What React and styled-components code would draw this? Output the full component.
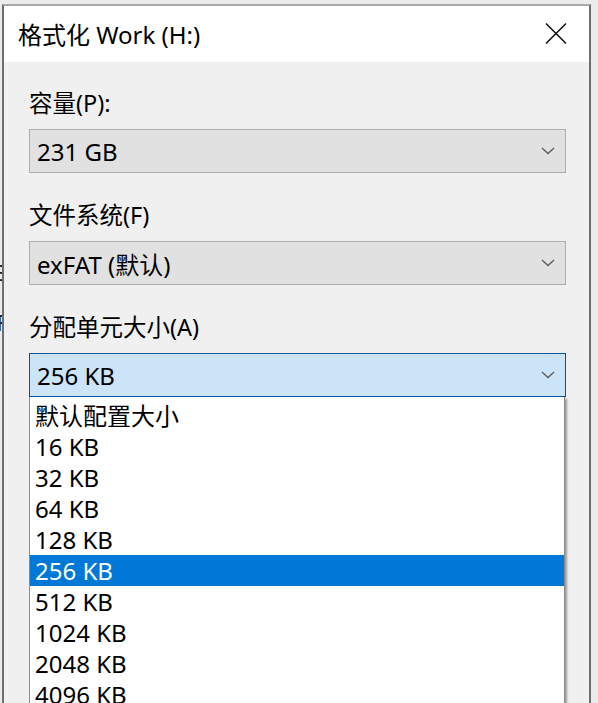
import React from "react";
import styled, { createGlobalStyle } from "styled-components";

const GlobalStyle = createGlobalStyle`
  html, body {
    margin: 0;
    padding: 0;
    background: #ebebeb;
    overflow: hidden;
  }
  body {
    font-family: "Noto Sans", "Noto Sans CJK SC", sans-serif;
    color: #000;
  }
`;

const Page = styled.div`
  display: flex;
  height: 703px;
  padding-top: 4px;
  box-sizing: border-box;
`;

// the window underneath, only its last pixels peek out on the left
const Backdrop = styled.div`
  width: 2px;
  overflow: hidden;
  display: flex;
  flex-direction: column;
  align-items: flex-end;
  padding-top: 152px;
`;

const Peek = styled.span`
  display: block;
  height: ${(p) => p.h}px;
  line-height: ${(p) => p.h}px;
  font-size: 22px;
  color: ${(p) => p.color || "#222"};
  margin-right: -6px;
  white-space: nowrap;
`;

const Window = styled.div`
  width: 589px;
  box-sizing: border-box;
  display: flex;
  flex-direction: column;
  border: 2px solid #6f6f6f;
  border-top: 2px solid #a9a9a9;
  border-bottom: none;
  background: #f0f0f0;
`;

const TitleBar = styled.div`
  height: 56px;
  flex-shrink: 0;
  background: #fff;
  display: flex;
  align-items: center;
  justify-content: space-between;
  padding: 0 22px 2px 14px;
  box-sizing: border-box;
`;

const Title = styled.div`
  font-size: 24px;
`;

const CloseButton = styled.div`
  width: 22px;
  height: 22px;
  display: flex;
  align-items: center;
  justify-content: center;
`;

const Body = styled.div`
  flex: 1;
  display: flex;
  flex-direction: column;
  gap: 27px;
  padding: 26px 23px 0 25px;
`;

const Field = styled.div`
  display: flex;
  flex-direction: column;
  gap: 11px;
`;

const Label = styled.div`
  height: 30px;
  line-height: 30px;
  font-size: 23.5px;
`;

const ComboWrap = styled.div`
  position: relative;
`;

const Combo = styled.div`
  height: 44px;
  box-sizing: border-box;
  display: flex;
  align-items: center;
  justify-content: space-between;
  padding: 0 10px 0 7px;
  font-size: 24px;
  background: ${(p) => (p.open ? "#cce4f7" : "#e1e1e1")};
  border: 1px solid ${(p) => (p.open ? "#005499" : "#adadad")};
`;

const DropList = styled.div`
  position: absolute;
  top: 100%;
  left: 0;
  right: 1px;
  background: #fff;
  border: 1px solid #8a8a8a;
  border-top: none;
  padding-top: 3px;
  box-shadow: 2px 2px 2px rgba(0, 0, 0, 0.35);
`;

const Option = styled.div`
  height: 31px;
  line-height: 31px;
  padding-left: 5px;
  font-size: 24px;
  background: ${(p) => (p.selected ? "#0078d7" : "transparent")};
  color: ${(p) => (p.selected ? "#fff" : "#000")};
`;

const Chevron = () => (
  <svg width="14" height="8" viewBox="0 0 14 8">
    <path d="M1 1 L7 6.5 L13 1" fill="none" stroke="#5a5a5a" strokeWidth="1.3" />
  </svg>
);

const CloseIcon = () => (
  <svg width="22" height="21" viewBox="0 0 22 21">
    <path d="M1 0.5 L21 20.5 M21 0.5 L1 20.5" stroke="#111" strokeWidth="1.5" />
  </svg>
);

const sizes = [
  "默认配置大小",
  "16 KB",
  "32 KB",
  "64 KB",
  "128 KB",
  "256 KB",
  "512 KB",
  "1024 KB",
  "2048 KB",
  "4096 KB",
  "8192 KB",
];

export default function App() {
  return (
    <>
      <GlobalStyle />
      <Page>
        <Backdrop>
          <Peek h={36} color="#6b3b1c">(</Peek>
          <Peek h={66} />
          <Peek h={28}>B</Peek>
          <Peek h={22} />
          <Peek h={28}>F</Peek>
          <Peek h={32} />
          <Peek h={30}>(</Peek>
        </Backdrop>
        <Window>
          <TitleBar>
            <Title>格式化 Work (H:)</Title>
            <CloseButton>
              <CloseIcon />
            </CloseButton>
          </TitleBar>
          <Body>
            <Field>
              <Label>容量(P):</Label>
              <Combo>
                <span>231 GB</span>
                <Chevron />
              </Combo>
            </Field>
            <Field>
              <Label>文件系统(F)</Label>
              <Combo>
                <span>exFAT (默认)</span>
                <Chevron />
              </Combo>
            </Field>
            <Field>
              <Label>分配单元大小(A)</Label>
              <ComboWrap>
                <Combo open>
                  <span>256 KB</span>
                  <Chevron />
                </Combo>
                <DropList>
                  {sizes.map((s) => (
                    <Option key={s} selected={s === "256 KB"}>
                      {s}
                    </Option>
                  ))}
                </DropList>
              </ComboWrap>
            </Field>
          </Body>
        </Window>
      </Page>
    </>
  );
}
